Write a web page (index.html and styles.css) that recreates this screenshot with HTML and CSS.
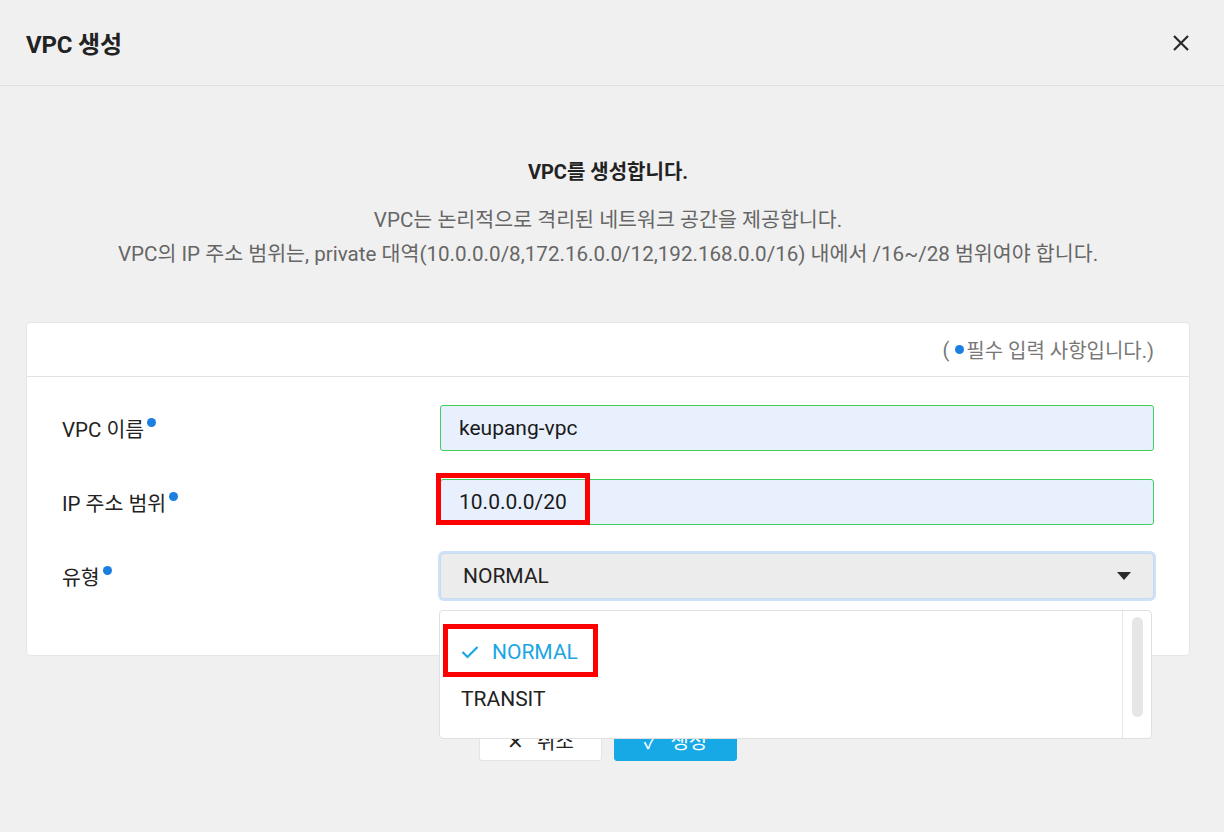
FILE: index.html
```html
<!DOCTYPE html>
<html lang="ko">
<head>
<meta charset="utf-8">
<title>VPC 생성</title>
<link rel="stylesheet" href="styles.css">
</head>
<body>
<div class="modal">
  <header class="modal-header">
    <h1 class="modal-title">VPC 생성</h1>
    <button class="close-btn" aria-label="닫기">
      <svg width="18" height="18" viewBox="0 0 18 18"><path d="M2 2L16 16M16 2L2 16" stroke="#2a2a2a" stroke-width="2.2" fill="none"/></svg>
    </button>
  </header>
  <main class="modal-body">
    <section class="intro">
      <h2 class="intro-title">VPC를 생성합니다.</h2>
      <p class="intro-text">VPC는 논리적으로 격리된 네트워크 공간을 제공합니다.<br>VPC의 IP 주소 범위는, private 대역(10.0.0.0/8,172.16.0.0/12,192.168.0.0/16) 내에서 /16~/28 범위여야 합니다.</p>
    </section>
    <section class="card">
      <div class="card-head">(<span class="dot dot-inline"></span>필수 입력 사항입니다.)</div>
      <div class="card-body">
        <div class="row">
          <label class="label">VPC 이름<span class="dot"></span></label>
          <div class="field">
            <div class="input">keupang-vpc</div>
          </div>
        </div>
        <div class="row">
          <label class="label">IP 주소 범위<span class="dot"></span></label>
          <div class="field">
            <div class="input">10.0.0.0/20</div>
            <div class="mark mark-ip"></div>
          </div>
        </div>
        <div class="row">
          <label class="label">유형<span class="dot"></span></label>
          <div class="field">
            <div class="select">
              <span>NORMAL</span>
              <span class="caret"></span>
            </div>
            <div class="dropdown">
              <ul class="options">
                <li class="option selected">
                  <svg class="check" width="18" height="14" viewBox="0 0 18 14"><path d="M1.5 7L6.5 12L16.5 2" stroke="#1ba6e4" stroke-width="2.2" fill="none"/></svg>
                  NORMAL
                </li>
                <li class="option">TRANSIT</li>
              </ul>
              <div class="scroll"><div class="thumb"></div></div>
              <div class="mark mark-opt"></div>
            </div>
          </div>
        </div>
      </div>
    </section>
    <div class="actions">
      <button class="btn btn-cancel">✕ 취소</button>
      <button class="btn btn-create">✓ 생성</button>
    </div>
  </main>
</div>
</body>
</html>
```
FILE: styles.css
```css
* { box-sizing: border-box; }
html, body { margin: 0; padding: 0; }
body {
  background: #f0f0f0;
  font-family: Roboto, "Noto Sans CJK KR", sans-serif;
  color: #222;
  width: 1224px;
  height: 832px;
  overflow: hidden;
}
.modal-header {
  height: 86px;
  border-bottom: 1px solid #e0e0e0;
  display: flex;
  align-items: center;
  justify-content: space-between;
  padding: 0 34px 0 26px;
}
.modal-title {
  margin: 0;
  font-size: 24px;
  font-weight: 700;
  color: #222;
  letter-spacing: -0.2px;
}
.close-btn {
  background: none;
  border: 0;
  padding: 0;
  width: 18px;
  height: 18px;
  display: flex;
}
.modal-body {
  padding: 0 34px 0 26px;
}
.intro {
  text-align: center;
  padding-top: 72px;
  height: 236px;
}
.intro-title {
  margin: 0 0 17px;
  font-size: 20px;
  font-weight: 700;
  line-height: 28px;
  color: #222;
}
.intro-text {
  margin: 0;
  font-size: 20.6px;
  line-height: 34px;
  color: #666;
}
.card {
  background: #fff;
  border-radius: 4px;
  border: 1px solid #e6e6e6;
}
.card-head {
  height: 54px;
  border-bottom: 1px solid #e2e2e2;
  display: flex;
  align-items: center;
  justify-content: flex-end;
  padding-right: 35px;
  font-size: 20px;
  color: #777;
}
.dot {
  display: inline-block;
  width: 9px;
  height: 9px;
  border-radius: 50%;
  background: #1a7fe0;
  margin-left: 3px;
  vertical-align: 10px;
}
.dot-inline { margin: 0 2px 0 6px; vertical-align: 7px; }
.card-body {
  padding: 28px 35px 56px 35px;
  display: flex;
  flex-direction: column;
  gap: 28px;
}
.row {
  display: flex;
  align-items: center;
  height: 46px;
}
.label {
  width: 378px;
  font-size: 20.5px;
  color: #222;
}
.field {
  flex: 1;
  position: relative;
  height: 100%;
}
.input {
  height: 46px;
  background: #e8f0fe;
  border: 1px solid #3ecf5e;
  border-radius: 3px;
  padding: 0 18px;
  display: flex;
  align-items: center;
  font-size: 21px;
  color: #1a1a1a;
}
.select {
  height: 46px;
  background: #ececec;
  border: 1px solid #c6dcf4;
  box-shadow: 0 0 0 2px #cfe1f6;
  border-radius: 4px;
  padding: 0 22px;
  display: flex;
  align-items: center;
  justify-content: space-between;
  font-size: 21px;
  color: #222;
}
.caret {
  width: 0;
  height: 0;
  border-left: 7px solid transparent;
  border-right: 7px solid transparent;
  border-top: 8px solid #2a2a2a;
}
.dropdown {
  position: absolute;
  left: -1px;
  right: 2px;
  top: 57px;
  height: 129px;
  background: #fff;
  border: 1px solid #e0e0e0;
  border-radius: 4px;
  display: flex;
  z-index: 5;
}
.options {
  list-style: none;
  margin: 0;
  padding: 17px 0 0 0;
  flex: 1;
}
.option {
  height: 47px;
  display: flex;
  align-items: center;
  padding-left: 21px;
  font-size: 21px;
  color: #222;
}
.option.selected { color: #1ba6e4; }
.check { margin-right: 13px; }
.scroll {
  width: 29px;
  border-left: 1px solid #e6e6e6;
  padding: 6px 0 0 9px;
}
.thumb {
  width: 11px;
  height: 100px;
  border-radius: 6px;
  background: #e6e6e6;
}
.mark {
  position: absolute;
  border: 5px solid #ff0000;
  pointer-events: none;
}
.mark-ip {
  left: -4px;
  top: -6px;
  width: 154px;
  height: 52px;
}
.mark-opt {
  left: 3px;
  top: 13px;
  width: 155px;
  height: 53px;
}
.actions {
  display: flex;
  justify-content: center;
  gap: 12px;
  margin-top: 64px;
}
.btn {
  width: 123px;
  height: 41px;
  border-radius: 3px;
  font-family: Roboto, "Noto Sans CJK KR", sans-serif;
  font-size: 20px;
  border: 1px solid #e4e4e4;
  word-spacing: 8px;
}
.btn-cancel { background: #fff; color: #222; }
.btn-create { background: #17a9e6; color: #fff; border-color: #17a9e6; }
```
